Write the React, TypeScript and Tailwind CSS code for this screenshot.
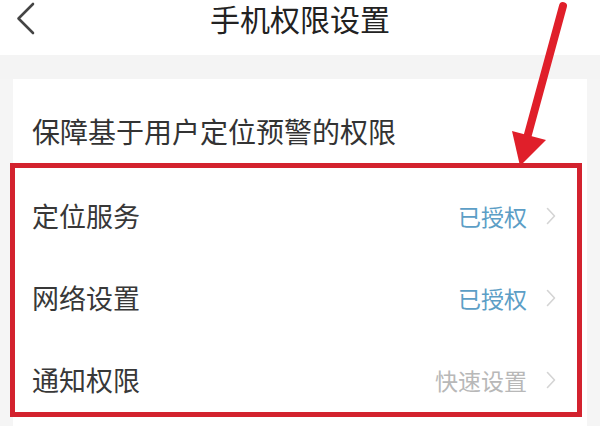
import React from "react";

const font = { fontFamily: '"Noto Sans CJK SC", "Noto Sans", sans-serif' };

function Chevron() {
  return (
    <svg width="10" height="18" viewBox="0 0 10 18" className="shrink-0">
      <polyline points="1.5,1.5 8.5,9 1.5,16.5" fill="none" stroke="#d4d4d4" strokeWidth="1.6" strokeLinecap="round" strokeLinejoin="round" />
    </svg>
  );
}

function Row({ label, value, color }: { label: string; value: string; color: string }) {
  return (
    <div className="flex h-[82px] shrink-0 items-center justify-between pl-[17px] pr-[21px]">
      <span className="text-[27px] leading-[36px] text-[#383838]">{label}</span>
      <div className="flex items-center gap-[19px]">
        <span className={`text-[23px] leading-[30px] ${color}`}>{value}</span>
        <Chevron />
      </div>
    </div>
  );
}

export default function App() {
  return (
    <div className="relative h-[426px] w-[600px] overflow-hidden bg-[#f5f5f5]" style={font}>
      <header className="relative flex h-[55px] items-start justify-center bg-white">
        <svg width="40" height="40" viewBox="0 0 40 40" className="absolute left-0 top-0">
          <polyline points="33,4 18.5,18.5 33,33" fill="none" stroke="#444" strokeWidth="2.6" strokeLinecap="round" strokeLinejoin="round" />
        </svg>
        <h1 className="text-[30px] leading-[36px] text-[#222]">手机权限设置</h1>
      </header>
      <div className="h-[24px] bg-[#f4f4f4]" />
      <main className="mx-[13px] h-[347px] bg-white">
        <div className="pl-[19px] pt-[32px] text-[28px] leading-[40px] text-[#333]">保障基于用户定位预警的权限</div>
        <div className="-ml-[3px] mt-[12px] flex h-[254px] w-[572px] flex-col overflow-hidden border-[5px] border-[#d3222e] pt-[7px]">
          <Row label="定位服务" value="已授权" color="text-[#5c9ec6]" />
          <Row label="网络设置" value="已授权" color="text-[#5c9ec6]" />
          <Row label="通知权限" value="快速设置" color="text-[#b8b8b8]" />
        </div>
      </main>
      <svg width="600" height="426" viewBox="0 0 600 426" className="pointer-events-none absolute left-0 top-0">
        <line x1="563" y1="6" x2="527" y2="138" stroke="#e01f2a" strokeWidth="8" strokeLinecap="round" />
        <polygon points="520,166 512,131 546,140" fill="#e01f2a" />
      </svg>
    </div>
  );
}
